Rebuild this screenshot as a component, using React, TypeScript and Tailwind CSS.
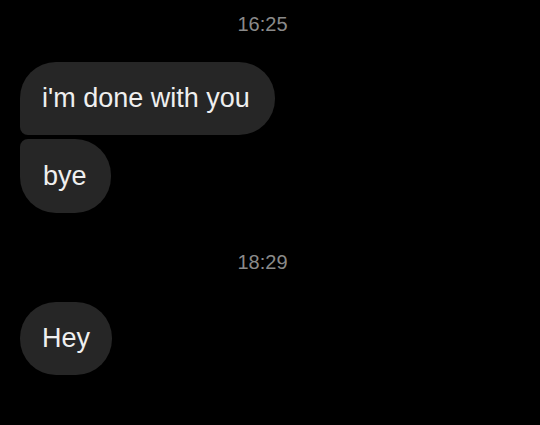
export default function App() {
  return (
    <div
      className="w-[540px] h-[425px] bg-black overflow-hidden pt-[12px]"
      style={{ fontFamily: '"Liberation Sans", Arial, sans-serif' }}
    >
      {/* first block */}
      <div className="flex justify-center pr-[15px] h-[24px] items-center text-[20px] text-[#8a8a8a]">16:25</div>
      <div className="mt-[26px] pl-[20px] flex flex-col items-start gap-[4px]">
        <div className="h-[73px] flex items-center pl-[22px] pr-[25px] bg-[#262626] text-[#efefef] text-[27px] rounded-[36px] rounded-bl-[8px]">
          i'm done with you
        </div>
        <div className="h-[74px] flex items-center pl-[23px] pr-[24px] bg-[#262626] text-[#efefef] text-[27px] rounded-[36px] rounded-tl-[8px]">
          bye
        </div>
      </div>

      {/* second block */}
      <div className="mt-[37px] flex justify-center pr-[15px] h-[24px] items-center text-[20px] text-[#8a8a8a]">18:29</div>
      <div className="mt-[28px] pl-[20px] flex">
        <div className="h-[73px] flex items-center px-[22px] bg-[#262626] text-[#efefef] text-[27px] rounded-[36px]">
          Hey
        </div>
      </div>
    </div>
  );
}
